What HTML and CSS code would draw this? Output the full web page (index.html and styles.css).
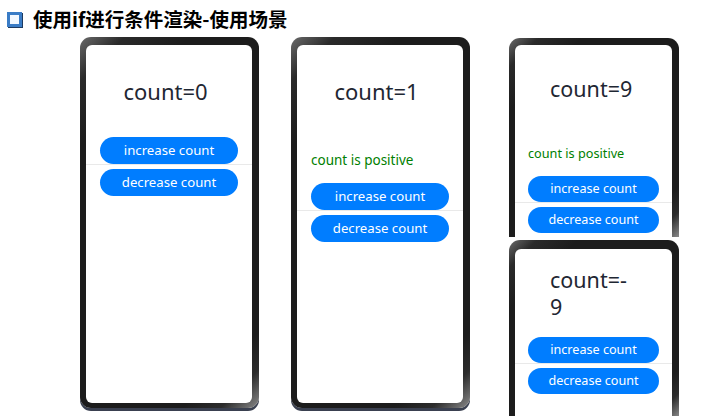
FILE: index.html
```html
<!DOCTYPE html>
<html lang="zh-CN">
<head>
<meta charset="utf-8">
<title>使用if进行条件渲染-使用场景</title>
<link rel="stylesheet" href="styles.css">
</head>
<body>
<header class="title">
  <span class="title-icon"></span>
  <h1 class="title-text">使用if进行条件渲染-使用场景</h1>
</header>
<main class="stage">
  <div class="phone phone-tall">
    <div class="screen">
      <div class="count">count=0</div>
      <button class="btn">increase count</button>
      <div class="divider"></div>
      <button class="btn">decrease count</button>
    </div>
  </div>
  <div class="phone phone-tall phone-second">
    <div class="screen">
      <div class="count">count=1</div>
      <div class="positive">count is positive</div>
      <button class="btn">increase count</button>
      <div class="divider"></div>
      <button class="btn">decrease count</button>
    </div>
  </div>
  <div class="stack">
    <div class="phone phone-cut">
      <div class="screen screen-small">
        <div class="count">count=9</div>
        <div class="positive">count is positive</div>
        <button class="btn">increase count</button>
        <div class="divider"></div>
        <button class="btn">decrease count</button>
      </div>
    </div>
    <div class="phone phone-low">
      <div class="screen screen-small screen-low">
        <div class="count">count=-<wbr>9</div>
        <button class="btn">increase count</button>
        <div class="divider"></div>
        <button class="btn">decrease count</button>
      </div>
    </div>
  </div>
</main>
</body>
</html>
```

FILE: styles.css
```css
html, body {
  margin: 0;
  padding: 0;
  background: #ffffff;
}
body {
  width: 701px;
  height: 416px;
  overflow: hidden;
  font-family: "Noto Sans", "Noto Sans CJK SC", sans-serif;
}

.title {
  height: 37px;
  display: flex;
  align-items: center;
  padding-left: 7px;
  box-sizing: border-box;
}
.title-icon {
  width: 15px;
  height: 15px;
  box-sizing: border-box;
  border: 3px solid #3a7cc6;
  background: #f2f8ff;
  box-shadow: 1px 1px 0 #1d3a60;
  margin-top: 1px;
}
.title-text {
  margin: 0 0 0 11px;
  font-family: "Noto Sans CJK SC", "Noto Sans", sans-serif;
  font-weight: 700;
  font-size: 19.5px;
  line-height: 24px;
  color: #000000;
}

.stage {
  display: flex;
  align-items: flex-start;
  padding-left: 80px;
}

.phone {
  box-sizing: border-box;
  background:
    linear-gradient(135deg, #6a6a6a 0%, #2a2a2a 8%, #1c1c1c 20%, #1c1c1c 86%, #2c2c2c 93%, #8a8a8a 100%);
  border-radius: 11px;
  display: flex;
  flex-direction: column;
}
.phone-tall {
  width: 179px;
  height: 371px;
  padding: 8px 7px 5px 6px;
  box-shadow: 0 3px 0 #3a4050;
}
.phone-second {
  margin-left: 32px;
}

.stack {
  margin-left: 39px;
  margin-top: 1px;
  width: 170px;
  display: flex;
  flex-direction: column;
}
.phone-cut {
  height: 199px;
  padding: 7px 7px 0 6px;
  border-radius: 11px 11px 0 0;
  overflow: hidden;
}
.phone-low {
  margin-top: 3px;
  height: 177px;
  padding: 9px 7px 0 6px;
  border-radius: 11px 11px 0 0;
  overflow: hidden;
}

.screen {
  flex: 1;
  background: #ffffff;
  border-radius: 6px;
  display: flex;
  flex-direction: column;
  align-items: center;
  padding-top: 31px;
}
.screen-small {
  flex: none;
  height: 320px;
  padding-top: 30px;
}
.screen-low {
  padding-top: 17px;
}

.count {
  width: 91px;
  font-size: 22px;
  line-height: 30px;
  color: #1f2733;
  margin-bottom: 31px;
  text-align: left;
}
.screen-small .count {
  width: 87px;
  font-size: 21.5px;
  line-height: 28px;
  margin-bottom: 28px;
}
.screen-low .count {
  line-height: 27px;
  margin-bottom: 17px;
}

.positive {
  width: 138px;
  height: 46px;
  line-height: 46px;
  font-size: 13.5px;
  color: #008000;
}
.screen-small .positive {
  width: 131px;
  height: 45px;
  line-height: 45px;
  font-size: 12.7px;
}

.btn {
  width: 138px;
  height: 27px;
  border: none;
  border-radius: 14px;
  background: #007dff;
  color: #ffffff;
  font-family: "Noto Sans", sans-serif;
  font-size: 13.2px;
  line-height: 27px;
  padding: 0;
  flex: none;
}
.screen-small .btn {
  width: 131px;
  height: 26px;
  line-height: 26px;
  border-radius: 13px;
  font-size: 12.6px;
}

.divider {
  align-self: stretch;
  height: 1px;
  background: #e9e9e9;
  margin-bottom: 4px;
  flex: none;
}
```
